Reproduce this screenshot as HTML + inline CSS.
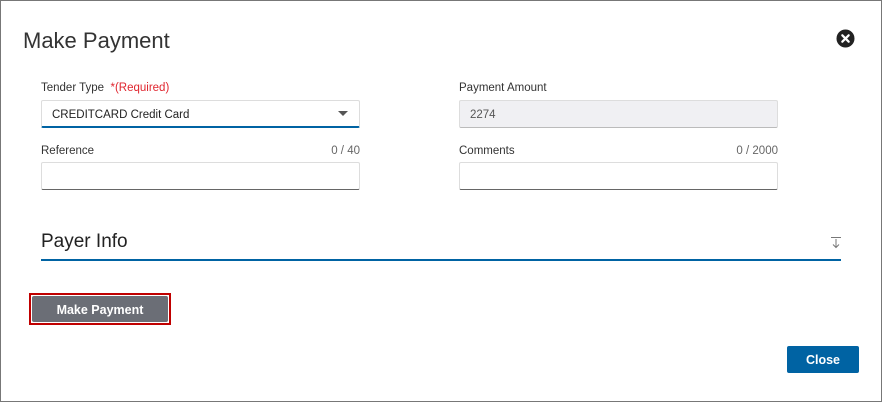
<!DOCTYPE html>
<html><head><meta charset="utf-8"><style>
*{box-sizing:border-box;margin:0;padding:0}
body{width:882px;height:402px;background:#fff;font-family:"Liberation Sans",sans-serif;color:#333;position:relative;overflow:hidden}
.frame{position:absolute;left:0;top:0;width:882px;height:402px;border:1px solid #777;}
.abs{position:absolute}
.title{left:23px;top:28px;font-size:22px;color:#333;}
.lbl{font-size:11.5px;color:#333}
.cnt{font-size:11.5px;color:#666;text-align:right}
.inp{border:1px solid #ddd;border-bottom:1px solid #666;border-radius:2px;background:#fff;height:28px;font-size:11.5px;padding:8px 10px;}
</style></head><body>
<div class="frame"></div>
<div class="abs title">Make Payment</div>
<svg class="abs" style="left:836px;top:29px" width="19" height="19" viewBox="0 0 19 19"><circle cx="9.5" cy="9.5" r="9" fill="#222"/><path d="M6.3 6.3L12.7 12.7M12.7 6.3L6.3 12.7" stroke="#fff" stroke-width="2.2" stroke-linecap="round"/></svg>

<div class="abs lbl" style="left:41px;top:82px">Tender Type&nbsp; <span style="color:#e0262f">*(Required)</span></div>
<div class="abs inp" style="left:41px;top:100px;width:319px;border-bottom:2px solid #0063a3;color:#222">CREDITCARD Credit Card</div>
<svg class="abs" style="left:338px;top:111px" width="10" height="6"><path d="M0 0H10L5 5Z" fill="#555"/></svg>
<div class="abs lbl" style="left:41px;top:145px">Reference</div>
<div class="abs cnt" style="left:300px;top:145px;width:60px">0 / 40</div>
<div class="abs inp" style="left:41px;top:162px;width:319px"></div>

<div class="abs lbl" style="left:459px;top:82px">Payment Amount</div>
<div class="abs inp" style="left:459px;top:100px;width:319px;background:#f0f0f3;border-bottom:1px solid #bbb;color:#555">2274</div>
<div class="abs lbl" style="left:459px;top:145px">Comments</div>
<div class="abs cnt" style="left:700px;top:145px;width:78px">0 / 2000</div>
<div class="abs inp" style="left:459px;top:162px;width:319px"></div>

<div class="abs" style="left:41px;top:231px;font-size:19px;color:#222">Payer Info</div>
<svg class="abs" style="left:830px;top:236px" width="12" height="13"><path d="M1 1.5H11M6 3V11.5M3 8.5L6 11.5L9 8.5" stroke="#777" stroke-width="1" fill="none"/></svg>
<div class="abs" style="left:41px;top:259px;width:800px;height:2px;background:#0063a3"></div>

<div class="abs" style="left:29px;top:293px;width:142px;height:32px;border:2px solid #c00000;padding:1px">
<div style="width:100%;height:100%;background:#6b6e76;border-radius:2px;color:#fff;font-weight:bold;font-size:12.5px;text-align:center;line-height:28px">Make Payment</div></div>

<div class="abs" style="left:787px;top:346px;width:72px;height:27px;background:#0063a3;border-radius:2px;color:#fff;font-weight:bold;font-size:12.5px;text-align:center;line-height:28px">Close</div>
</body></html>
